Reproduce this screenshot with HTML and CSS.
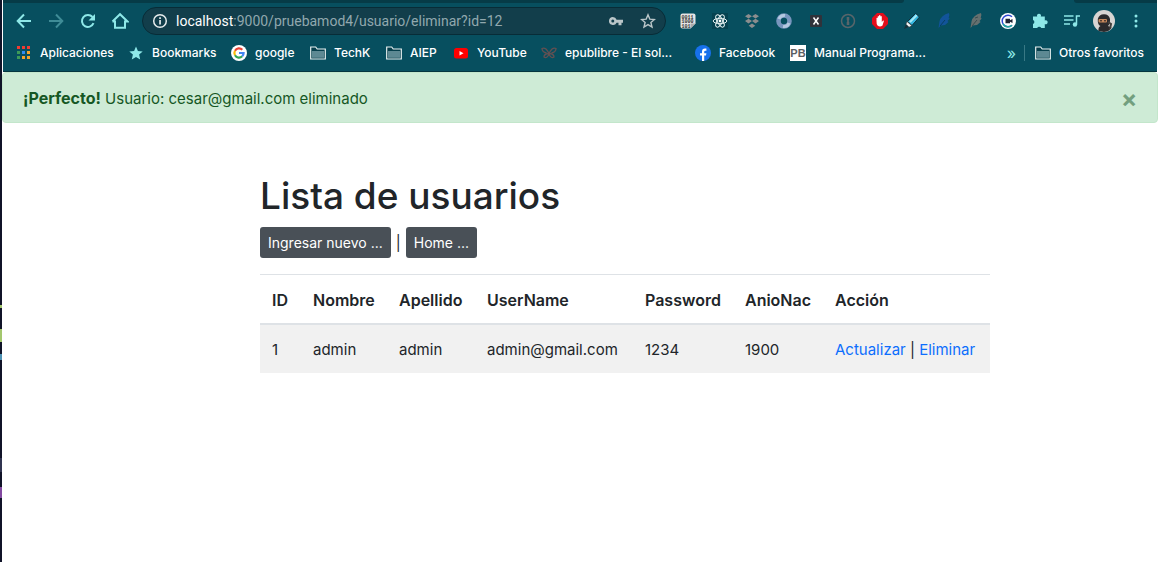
FILE: index.html
```html
<!DOCTYPE html>
<html lang="es">
<head>
<meta charset="utf-8">
<title>Lista de usuarios</title>
<link rel="stylesheet" href="styles.css">
</head>
<body>
<div class="desktop">
<div class="window">
<header class="chrome">
  <div class="tabstrip"><span class="tabs-left"></span><span class="tab-active"></span><span class="tabs-right"></span></div>
  <div class="toolbar">
    <button class="tool" aria-label="Atrás"><svg width="16" height="16" viewBox="0 0 16 16" class="line"><path d="M15 8H2M8 1.5 1.7 8 8 14.5"/></svg></button>
    <button class="tool dim" aria-label="Adelante"><svg width="16" height="16" viewBox="0 0 16 16" class="line"><path d="M1 8h13M8 1.5 14.3 8 8 14.5"/></svg></button>
    <button class="tool" aria-label="Recargar"><svg width="16" height="16" viewBox="0 0 16 16"><path class="line" d="M13.5 10.2A6 6 0 1 1 12.5 4"/><path d="M15 1v6.5H8.5z" fill="currentColor"/></svg></button>
    <button class="tool" aria-label="Inicio"><svg width="18" height="18" viewBox="0 0 18 18" class="line"><path d="M4 8.5v7.3h10V8.5M1.5 9.5 9 2.2l7.500 7.300H14M1.500 9.500H4"/></svg></button>
    <div class="omnibox">
      <button class="omni-btn info" aria-label="Información del sitio"><svg width="16" height="16" viewBox="0 0 16 16"><circle cx="8" cy="8" r="6.300" fill="none" stroke="currentColor" stroke-width="1.500"/><path d="M7.200 7h1.700v4.500H7.200zM7.200 4.300h1.700V6H7.200z" fill="currentColor"/></svg></button>
      <div class="url"><span class="host">localhost</span>:9000/pruebamod4/usuario/eliminar?id=12</div>
      <button class="omni-btn" aria-label="Contraseñas"><svg width="16" height="16" viewBox="0 0 16 16"><path fill="currentColor" fill-rule="evenodd" d="M4.800 4a4 4 0 0 1 3.800 2.700H15v3h-1.500v2.500h-3V9.700H8.600A4 4 0 1 1 4.800 4m0 2.500a1.500 1.500 0 1 0 0 3 1.500 1.500 0 0 0 0-3"/></svg></button>
      <button class="omni-btn" aria-label="Marcar página"><svg width="16" height="16" viewBox="0 0 16 16"><path fill="none" stroke="currentColor" stroke-width="1.400" d="m8 1.800 1.800 4.300 4.600.400-3.500 3 1.100 4.600L8 11.600l-4 2.500 1.100-4.600-3.500-3 4.600-.400z"/></svg></button>
    </div>
    <button class="tool" aria-label="Código binario"><svg width="16" height="16" viewBox="0 0 16 16"><path d="M2.500.5h11q2 0 2 2v8l-5 5h-8q-2 0-2-2v-11q0-2 2-2" fill="#e4e4e4"/><path d="M10.500 15.500v-5h5z" fill="#aaa"/><g class="bits"><text x="1.500" y="5.500">0011</text><text x="1.500" y="10">1000</text><text x="1.500" y="14.500">101</text></g></svg></button>
    <button class="tool" aria-label="React"><svg width="16" height="16" viewBox="0 0 16 16"><path d="M0 0h16v16H0z" fill="#064250"/><g fill="none" stroke="#e9f4f4" stroke-width="1"><ellipse cx="8" cy="8" rx="6.800" ry="2.700"/><ellipse cx="8" cy="8" rx="6.800" ry="2.700" transform="rotate(60 8 8)"/><ellipse cx="8" cy="8" rx="6.800" ry="2.700" transform="rotate(120 8 8)"/></g><circle cx="8" cy="8" r="1.400" fill="#fff"/></svg></button>
    <button class="tool" aria-label="Dropbox"><svg width="16" height="16" viewBox="0 0 16 16"><path fill="#8b8d8e" d="m4.500 1 3.500 2.300-3.500 2.300L1 3.300zM11.500 1 15 3.300l-3.500 2.300L8 3.300zM4.500 5.800 8 8.100l-3.500 2.300L1 8.100zM11.500 5.800 15 8.100l-3.500 2.300L8 8.100zM8 10.600l3.300 2.100L8 15l-3.300-2.300z"/></svg></button>
    <button class="tool" aria-label="Anillo"><svg width="16" height="16" viewBox="0 0 16 16"><circle cx="8" cy="8" r="5.500" fill="none" stroke="#7795bd" stroke-width="4.600"/><path d="M3 6a5.500 5.500 0 0 1 6-3.500M13 10a5.500 5.500 0 0 1-6 3.500" fill="none" stroke="#b4c8e0" stroke-width="3"/></svg></button>
    <button class="tool" aria-label="Xpath"><svg width="14" height="14" viewBox="0 0 14 14"><rect x="1" y="1" width="12" height="12" rx="1" fill="#30323a"/><path d="m4.500 3.500 5 7M9.500 3.500l-5 7" stroke="#fff" stroke-width="1.500"/></svg></button>
    <button class="tool" aria-label="Gestor de claves"><svg width="16" height="16" viewBox="0 0 16 16"><circle cx="8" cy="8" r="6.500" fill="none" stroke="#59656a" stroke-width="1.500"/><path d="M6.700 4h2.600v3l-.7 1 .7 1v3H6.700V9l.7-1-.7-1z" fill="#59656a"/></svg></button>
    <button class="tool" aria-label="Bloqueador"><svg width="16" height="16" viewBox="0 0 16 16"><path d="M5 0h6l5 5v6l-5 5H5l-5-5V5z" fill="#e40d1b"/><path d="M4.500 8V5q.7-.7 1.200 0v2.500-4q.7-.8 1.300 0v3.700-4.700q.8-.8 1.500 0v4.700-3.700q.7-.8 1.300 0V9l1.200-1.500q.8-.3.900.4L10.500 12.500Q8 14.500 5.500 12.500 4.400 11 4.500 8" fill="#fff"/></svg></button>
    <button class="tool" aria-label="Resaltador"><svg width="16" height="16" viewBox="0 0 16 16"><path d="m3.500 8.500 8-8 4 3.500-7.500 8.500z" fill="#36b5dd" stroke="#112d38"/><path d="m5.200 8.500 6.800-7 1.500 1.300-6.800 7z" fill="#a9e9f6"/><path d="m3 8.500 4.800 4.300-2.800 1.400-3-3z" fill="#f2f5f5" stroke="#222" stroke-width=".5"/><path d="m1.800 11.500 2.700 2.500L0 16z" fill="#18313b"/></svg></button>
    <button class="tool" aria-label="Pluma azul"><svg width="16" height="16" viewBox="0 0 16 16"><path d="M13 0q-8 2-9.500 8.500L2.500 15l2.300-2.500L9 12l3.500-3-1-1 2.200-2.500-1-.5Q14 2 13 0" fill="#12549a"/><path d="M4 13 9 7" stroke="#073e62"/></svg></button>
    <button class="tool" aria-label="Pluma gris"><svg width="16" height="16" viewBox="0 0 16 16"><path d="M13 0q-8 2-9.500 8.500L2.500 15l2.300-2.500L9 12l3.500-3-1-1 2.200-2.500-1-.5Q14 2 13 0" fill="#65706f"/><path d="M4 13 9 7M7 5l3-1" stroke="#394d50"/></svg></button>
    <button class="tool" aria-label="Grabador"><svg width="16" height="16" viewBox="0 0 16 16"><circle cx="8" cy="8" r="8" fill="#fff"/><path d="M12 12.200A5.800 5.800 0 1 1 12 3.800" fill="none" stroke="#3148d0" stroke-width="1.500"/><path d="M12 12.200A5.800 5.800 0 0 1 3 11" fill="none" stroke="#21a69c" stroke-width="1.500"/><path d="M5.500 5.700h4.500v1.500l2.500-1.200v4L10 8.800v1.500H5.500z" fill="#202434"/></svg></button>
    <button class="tool" aria-label="Extensiones"><svg width="16" height="16" viewBox="0 0 16 16"><path fill="currentColor" d="M1 3.500h4.200a2 2 0 1 1 3.600 0h4v4a2 2 0 1 1 0 3.600v4H9.200a2.100 2.100 0 0 0-4 0H1v-4.200a2 2 0 0 0 0-3.800z"/></svg></button>
    <button class="tool" aria-label="Multimedia"><svg width="18" height="16" viewBox="0 0 18 16"><path class="thin" d="M1 3h9.500M1 7h9.500M1 11h6M17 3h-3.500v8"/><circle cx="12" cy="11.500" r="2.200" fill="currentColor"/></svg></button>
    <button class="tool" aria-label="Perfil"><svg width="22" height="22" viewBox="0 0 22 22"><circle cx="11" cy="11" r="11" fill="#d8d5d3"/><path d="M5.500 21q-.5-4 2-5-3-1-2.700-7Q6 4.500 11 4.300q5 0 6 4.700.3 5-2 7l3.500 1.500q-2 4-7.500 4.500z" fill="#2b2a2c"/><rect x="5.500" y="9" width="8.500" height="3.500" rx="1" fill="#c98a5e"/><path d="M7 10.800h2M11 10.800h2" stroke="#211d1d"/><path d="m15 12 3 2-1 5" stroke="#433f3c" stroke-width="2" fill="none"/></svg></button>
    <button class="tool" aria-label="Menú"><svg width="16" height="16" viewBox="0 0 16 16" fill="currentColor"><circle cx="8" cy="3" r="1.500"/><circle cx="8" cy="8" r="1.500"/><circle cx="8" cy="13" r="1.500"/></svg></button>
  </div>
  <nav class="bookmarks" aria-label="Marcadores">
    <a href="#" class="bm w-apps"><svg width="16" height="16" viewBox="0 0 16 16"><path d="M1 1h3v3H1zM6 1h3v3H6zM11 1h3v3h-3z" fill="#ef3c32"/><path d="M1 6h3v3H1zM1 11h3v3H1z" fill="#3d9a58"/><path d="M6 6h3v3H6z" fill="#2d8cf0"/><path d="M6 11h3v3H6zM11 6h3v3h-3zM11 11h3v3h-3z" fill="#f3a42b"/></svg>Aplicaciones</a>
    <a href="#" class="bm w-star"><svg width="16" height="16" viewBox="0 0 16 16"><path fill="#8ee8e8" d="m8 1.500 1.900 4.400 4.800.500-3.600 3.200 1.100 4.800L8 11.900l-4.200 2.500 1.100-4.800L1.300 6.400l4.800-.5z"/></svg>Bookmarks</a>
    <a href="#" class="bm w-google"><svg width="16" height="16" viewBox="0 0 16 16"><circle cx="8" cy="8" r="8" fill="#fff"/><g fill="none" stroke-width="2.200"><path d="M4 5.700A4.600 4.600 0 0 1 11.300 4.800" stroke="#ea4335"/><path d="M4 10.300a4.600 4.600 0 0 1 0-4.600" stroke="#fbbc05"/><path d="M11.200 11.300A4.600 4.600 0 0 1 4 10.300" stroke="#34a853"/><path d="M8 8h4.600a4.600 4.600 0 0 1-1.400 3.300" stroke="#4285f4"/></g></svg>google</a>
    <a href="#" class="bm w-techk"><svg width="16" height="16" viewBox="0 0 16 16"><path d="M.7 14V2h5l1.500 2h8.100v10z" fill="#063f4c" stroke="#e8f1f1" stroke-width="1.200"/><path d="M2 6h12v6.800H2z" fill="#5d8993"/></svg>TechK</a>
    <a href="#" class="bm w-aiep"><svg width="16" height="16" viewBox="0 0 16 16"><path d="M.7 14V2h5l1.500 2h8.100v10z" fill="#063f4c" stroke="#e8f1f1" stroke-width="1.200"/><path d="M2 6h12v6.800H2z" fill="#5d8993"/></svg>AIEP</a>
    <a href="#" class="bm w-youtube"><svg width="16" height="16" viewBox="0 0 16 16"><rect x="1" y="3" width="14" height="10.500" rx="2.500" fill="#f00"/><path d="m6.500 6 4 2.200-4 2.200z" fill="#fff"/></svg>YouTube</a>
    <a href="#" class="bm w-epub"><svg width="16" height="16" viewBox="0 0 16 16"><path d="M8 9Q7 6 5 4M8 9q1-3 3-5M5 4Q3 2.500 1 3.500 1 7 5.500 8M11 4q2-1.500 4-.5 0 3.500-4.500 4.500M7.500 8.500Q3 9 3 12q3 2 5-3M8.500 8.500Q13 9 13 12q-3 2-5-3" fill="none" stroke="#625052" stroke-width="1.300"/></svg>epublibre - El sol...</a>
    <a href="#" class="bm w-facebook"><svg width="16" height="16" viewBox="0 0 16 16"><circle cx="8" cy="8" r="8" fill="#1771ec"/><path d="M7 16v-5.500H5V8.200h2V6.500q0-3 3-3h1.400v2.200h-1q-1.200 0-1.200 1.100v1.400h2.200l-.4 2.300H9.200V16z" fill="#fff"/></svg>Facebook</a>
    <a href="#" class="bm"><span class="pb">PB</span>Manual Programa...</a>
    <button class="more" aria-label="Más marcadores">»</button>
    <a href="#" class="bm others"><svg width="16" height="16" viewBox="0 0 16 16"><path d="M.7 14V2h5l1.500 2h8.100v10z" fill="#063f4c" stroke="#e8f1f1" stroke-width="1.200"/><path d="M2 6h12v6.800H2z" fill="#5d8993"/></svg>Otros favoritos</a>
  </nav>
</header>
<div class="alert" role="alert">
  <p><strong>¡Perfecto!</strong> Usuario: cesar@gmail.com eliminado</p>
  <button class="close" aria-label="Cerrar">×</button>
</div>
<main class="content">
  <h1>Lista de usuarios</h1>
  <div class="actions"><button class="btn">Ingresar nuevo ...</button><span>|</span><button class="btn">Home ...</button></div>
  <table class="users">
    <colgroup><col class="c-id"><col class="c-name"><col class="c-last"><col class="c-user"><col class="c-pass"><col class="c-year"><col></colgroup>
    <thead><tr><th>ID</th><th>Nombre</th><th>Apellido</th><th>UserName</th><th>Password</th><th>AnioNac</th><th>Acción</th></tr></thead>
    <tbody><tr><td>1</td><td>admin</td><td>admin</td><td>admin@gmail.com</td><td>1234</td><td>1900</td><td><a href="#">Actualizar</a> | <a href="#">Eliminar</a></td></tr></tbody>
  </table>
</main>
</div>
</div>
</body>
</html>
```
FILE: styles.css
```css
* { box-sizing: border-box; }
body {
  margin: 0;
  font-family: Inter, "Liberation Sans", sans-serif;
  font-size: 15px;
  line-height: 24px;
  color: #212529;
}
button { font: inherit; border: 0; padding: 0; background: none; cursor: pointer; }
a { text-decoration: none; }
svg { display: block; flex: none; }

/* strip of the editor window visible behind the browser */
.desktop {
  min-height: 100vh;
  padding-left: 2px;
  background: linear-gradient(#101328 0 305px, #a3c76d 305px 308px, #101328 308px 329px, #a3c76d 329px 342px, #101328 342px 354px, #4d91b3 354px 360px, #101328 360px 458px, #303450 458px 472px, #101328 472px 487px, #8248a0 487px 498px, #101328 498px);
}
.window { min-height: 100vh; background: #fff; }

.chrome {
  margin: 0 1px;
  background: #074f5f;
  border-bottom: 1px solid #05353f;
}
.tabstrip { display: flex; height: 3px; }
.tabs-left, .tabs-right { background: #063b47; }
.tabs-left { flex: 1; border-bottom-right-radius: 3px; }
.tab-active { width: 170px; }
.tabs-right { width: 83px; border-bottom-left-radius: 3px; }

.toolbar { display: flex; align-items: center; height: 36px; padding: 0 5px; color: #8ee8e8; }
.tool { display: flex; align-items: center; justify-content: center; flex: none; width: 32px; height: 32px; color: inherit; }
.dim { color: #3f8c97; }
.line, .thin { fill: none; stroke: currentColor; stroke-width: 2; }
.thin { stroke-width: 1.5; }
.bits { font: bold 5px "Liberation Mono", monospace; fill: #333; }

.omnibox {
  display: flex;
  align-items: center;
  flex: 1;
  height: 28px;
  margin: 0 6px;
  padding: 0 1px;
  border: 1px solid #082c37;
  border-radius: 14px;
  background: #123e4b;
  color: #bac6c9;
}
.omni-btn { display: flex; align-items: center; justify-content: center; flex: none; width: 32px; color: inherit; }
.info { color: #e6eced; }
.url { flex: 1; font-family: Roboto, sans-serif; font-size: 14px; color: #91a8ae; white-space: nowrap; }
.host { color: #fff; }

.bookmarks { display: flex; align-items: center; height: 32px; padding: 0 13px 4px; }
.bm { display: flex; align-items: center; gap: 8px; flex: none; font-size: 12px; font-weight: 500; line-height: 20px; color: #fff; white-space: nowrap; }
.w-apps { width: 112px; }
.w-star { width: 103px; }
.w-google { width: 79px; }
.w-techk { width: 76px; }
.w-aiep { width: 67px; }
.w-youtube { width: 88px; }
.w-epub { width: 154px; }
.w-facebook { width: 95px; }
.pb { width: 16px; height: 16px; background: #fff; color: #5b6064; font: bold 11px/16px "Liberation Sans", sans-serif; text-align: center; }
.more { margin-left: auto; padding-right: 8px; color: #8ee8e8; font-size: 16px; line-height: 16px; }
.others { padding-left: 10px; border-left: 1px solid #397985; line-height: 16px; }

.alert {
  display: flex;
  align-items: center;
  justify-content: space-between;
  padding: 13px 20px 11px;
  border: 1px solid #c3e6cb;
  border-radius: 4px;
  background: #ceebd6;
  color: #155724;
}
.alert p { margin: 0; }
.alert strong { font-size: 16px; font-weight: 700; }
.close { width: 16px; font-size: 24px; font-weight: 700; line-height: 24px; color: #739f7f; }

.content { padding: 49px 168px 0 258px; }
h1 { margin: 0 0 7px; font-size: 37px; font-weight: 500; line-height: 48px; }
.actions { display: flex; align-items: center; gap: 5px; margin-bottom: 16px; }
.btn { height: 31px; padding: 0 8px; border-radius: 3px; background: #495057; color: #fff; font-size: 14px; line-height: 21px; }
.users { width: 100%; table-layout: fixed; border-collapse: collapse; }
.users th, .users td { padding: 13px 12px 11px; border-top: 1px solid #dee2e6; text-align: left; white-space: nowrap; }
.users th { font-size: 16px; font-weight: 600; border-bottom: 2px solid #dee2e6; }
.users tbody tr { background: #f1f1f1; }
.users a { color: #0d6efd; }
.c-id { width: 41px; }
.c-name { width: 86px; }
.c-last { width: 88px; }
.c-user { width: 158px; }
.c-pass { width: 100px; }
.c-year { width: 90px; }
```
